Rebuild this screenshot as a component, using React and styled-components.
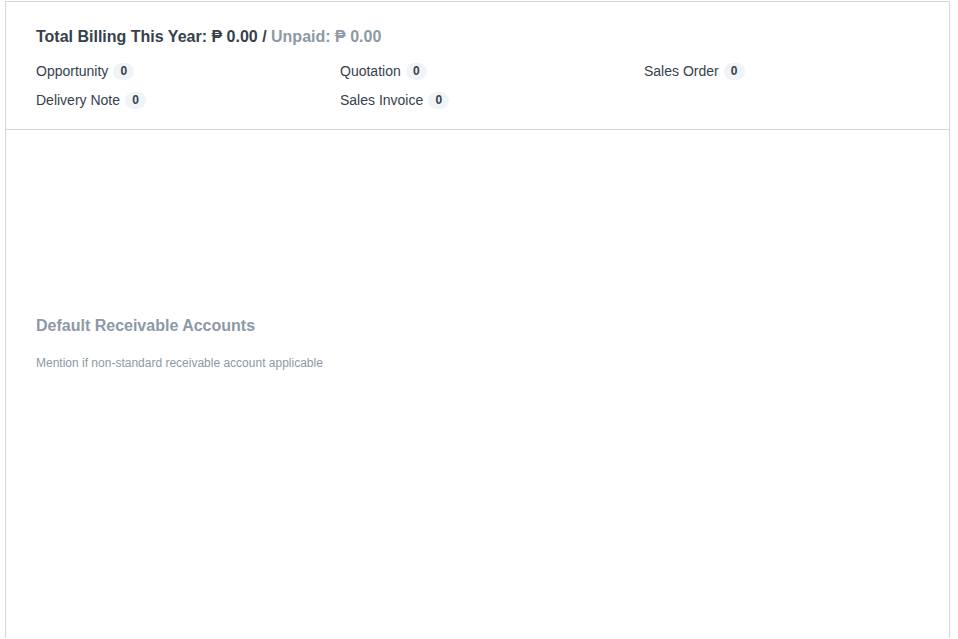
import React from 'react';
import styled, { createGlobalStyle } from 'styled-components';

const GlobalStyle = createGlobalStyle`
  body {
    margin: 0;
    background: #fff;
    font-family: "Liberation Sans", Arial, sans-serif;
    color: #36414c;
  }
`;

const Page = styled.div`
  padding-top: 1px;
  padding-left: 5px;
  width: 945px;
  min-height: 638px;
`;

const Panel = styled.div`
  border: 1px solid #d1d8dd;
  border-bottom: none;
  min-height: 637px;
  box-sizing: border-box;
`;

const Section = styled.div`
  padding: ${(props) => props.pad};
  border-bottom: ${(props) => (props.divider ? '1px solid #d1d8dd' : 'none')};
`;

const Title = styled.h5`
  margin: 0;
  font-size: 16px;
  line-height: 20px;
  font-weight: bold;
  color: ${(props) => (props.muted ? '#8d99a6' : '#36414c')};
`;

const Muted = styled.span`
  color: #8d99a6;
`;

const LinkGrid = styled.div`
  display: grid;
  grid-template-columns: 304px 304px 304px;
  row-gap: 9px;
  margin-top: 14px;
`;

const LinkItem = styled.div`
  display: flex;
  align-items: center;
  font-size: 14px;
  line-height: 20px;
  height: 20px;
`;

const Badge = styled.span`
  display: inline-flex;
  align-items: center;
  justify-content: center;
  margin-left: 5px;
  min-width: 21px;
  height: 17px;
  padding: 0 4px;
  box-sizing: border-box;
  border-radius: 9px;
  background: #f0f4f7;
  font-size: 12px;
  font-weight: bold;
  color: #36414c;
`;

const Help = styled.p`
  margin: 19px 0 0;
  font-size: 12px;
  line-height: 16px;
  color: #8d99a6;
`;

const links = [
  'Opportunity',
  'Quotation',
  'Sales Order',
  'Delivery Note',
  'Sales Invoice',
];

export default function App() {
  return (
    <Page>
      <GlobalStyle />
      <Panel>
        <Section pad="25px 30px 19px" divider>
          <Title>
            Total Billing This Year: ₱ 0.00 / <Muted>Unpaid: ₱ 0.00</Muted>
          </Title>
          <LinkGrid>
            {links.map((l) => (
              <LinkItem key={l}>
                {l}
                <Badge>0</Badge>
              </LinkItem>
            ))}
          </LinkGrid>
        </Section>
        <Section pad="186px 30px 0">
          <Title muted>Default Receivable Accounts</Title>
          <Help>Mention if non-standard receivable account applicable</Help>
        </Section>
      </Panel>
    </Page>
  );
}
